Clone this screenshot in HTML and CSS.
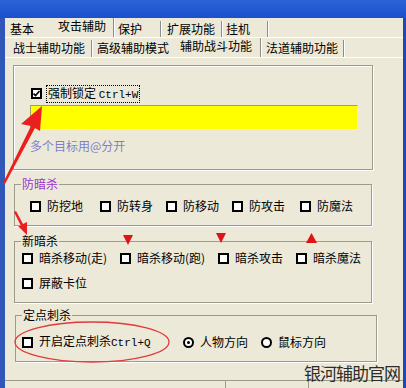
FILE: index.html
```html
<!DOCTYPE html>
<html lang="zh-CN">
<head>
    <meta charset="UTF-8">
    <title>攻击辅助</title>
    <link rel="stylesheet" href="styles.css">
</head>
<body>
    <div class="titlebar"></div>
    <div class="window">
        <div class="client">
            <div class="tabs tabs-top">
                <div class="tab">基本</div>
                <div class="tab active">攻击辅助</div>
                <div class="tab">保护</div>
                <div class="tab">扩展功能</div>
                <div class="tab">挂机</div>
            </div>
            <div class="tabs tabs-sub">
                <div class="tab">战士辅助功能</div>
                <div class="tab">高级辅助模式</div>
                <div class="tab active">辅助战斗功能</div>
                <div class="tab">法道辅助功能</div>
            </div>

            <div class="page">
                <div class="lockbox">
                    <div class="lock-row">
                        <span class="check on">
                            <svg width="7" height="7" viewBox="0 0 7 7"><polyline points="0.5,3.5 2.5,5.5 6.5,1" fill="none" stroke="#000" stroke-width="1.6"/></svg>
                        </span>
                        <span class="focus">强制锁定 <span class="mono">Ctrl+W</span></span>
                    </div>
                    <div class="yellow"></div>
                    <div class="hint">多个目标用@分开</div>
                </div>

                <fieldset class="group group-anti">
                    <legend class="purple">防暗杀</legend>
                    <div class="row-anti">
                        <div class="item"><span class="check"></span><span>防挖地</span></div>
                        <div class="item"><span class="check"></span><span>防转身</span></div>
                        <div class="item"><span class="check"></span><span>防移动</span></div>
                        <div class="item"><span class="check"></span><span>防攻击</span></div>
                        <div class="item"><span class="check"></span><span>防魔法</span></div>
                    </div>
                </fieldset>

                <fieldset class="group group-new">
                    <legend>新暗杀</legend>
                    <div class="row-new">
                        <div class="item"><span class="check"></span><span>暗杀移动(走)</span></div>
                        <div class="item"><span class="check"></span><span>暗杀移动(跑)</span></div>
                        <div class="item"><span class="check"></span><span>暗杀攻击</span></div>
                        <div class="item"><span class="check"></span><span>暗杀魔法</span></div>
                        <div class="item"><span class="check"></span><span>屏蔽卡位</span></div>
                    </div>
                </fieldset>

                <fieldset class="group group-point">
                    <legend>定点刺杀</legend>
                    <div class="row-point">
                        <div class="item"><span class="check"></span><span>开启定点刺杀<span class="mono">Ctrl+Q</span></span></div>
                        <div class="item"><span class="radio on"></span><span>人物方向</span></div>
                        <div class="item"><span class="radio"></span><span>鼠标方向</span></div>
                    </div>
                </fieldset>

                <div class="strip">
                    <div class="cell cell-a"></div>
                    <div class="cell cell-b"></div>
                    <div class="cell cell-c"></div>
                </div>
            </div>
        </div>
    </div>

    <div class="watermark">银河辅助官网</div>

    <!-- red annotations drawn over the dialog -->
    <svg class="marks" width="406" height="388" viewBox="0 0 406 388">
        <polygon points="42,106 21,124 31,126 3,183 5,184 35,128 40,131" fill="#ec1f1f"/>
        <polygon points="14,212 16,211 23,224 27,222 27,235 18,226 21,226" fill="#ec1f1f"/>
        <polygon points="123,235 133,235 128,245" fill="#e01414"/>
        <polygon points="216,233 226,233 221,243" fill="#e01414"/>
        <polygon points="306,243 317,243 311.5,233" fill="#e01414"/>
        <ellipse cx="92" cy="342" rx="77" ry="20" fill="none" stroke="#e03a3a" stroke-width="1.3"/>
    </svg>
</body>
</html>
```

FILE: styles.css
```css
body {
    margin: 0;
    width: 406px;
    height: 388px;
    overflow: hidden;
    position: relative;
    background: #ece9d8;
    font-family: "Noto Sans CJK SC", "Noto Sans", sans-serif;
    font-size: 12px;
    line-height: 16px;
    color: #000;
}
.titlebar {
    height: 18px;
    background: linear-gradient(#2c64d8, #1a50cb);
}
.window {
    display: flex;
    height: 370px;
    border-left: 5px solid #3158b8;
    border-right: 3px solid #1c49b8;
}
.client {
    flex: 1;
}
.tabs {
    display: flex;
    box-sizing: border-box;
    border-bottom: 1px solid #fff;
}
.tab {
    box-sizing: border-box;
    white-space: nowrap;
    border-right: 1px solid #8c8c8c;
    box-shadow: 1px 0 0 #fff;
    padding-left: 5px;
}
.tabs-top {
    height: 20px;
    padding-top: 3px;
}
.tabs-top .tab {
    height: 16px;
}
.tabs-top .tab:nth-child(1) { width: 48px; border-right: none; box-shadow: none; }
.tabs-top .tab:nth-child(2) { width: 61px; }
.tabs-top .tab:nth-child(3) { width: 47px; padding-left: 4px; }
.tabs-top .tab:nth-child(4) { width: 61px; padding-left: 6px; }
.tabs-top .tab:nth-child(5) { width: 46px; padding-left: 4px; }
.tabs-top .tab.active {
    margin-top: -3px;
    height: 19px;
}
.tabs-sub {
    height: 20px;
    padding-top: 2px;
}
.tabs-sub .tab {
    height: 17px;
}
.tabs-sub .tab:nth-child(1) { width: 87px; padding-left: 8px; }
.tabs-sub .tab:nth-child(2) { width: 83px; border-right: none; box-shadow: none; }
.tabs-sub .tab:nth-child(3) { width: 86px; }
.tabs-sub .tab:nth-child(4) { width: 83px; }
.tabs-sub .tab.active {
    margin-top: -2px;
    height: 19px;
}
.page {
    padding-top: 7px;
}
.lockbox {
    margin-left: 8px;
    width: 360px;
    height: 105px;
    box-sizing: border-box;
    border: 1px solid #9d9b8c;
    box-shadow: 1px 1px 0 #fff, inset 1px 1px 0 #fff;
    padding: 20px 0 0 16px;
}
.lock-row {
    display: flex;
    align-items: center;
    height: 15px;
}
.lock-row .check {
    margin-left: 1px;
}
.focus {
    margin-left: 4px;
    border: 1px dotted #000;
    padding: 0 1px;
    line-height: 13px;
}
.mono {
    font-family: "Liberation Mono", monospace;
    font-size: 11px;
}
.yellow {
    margin-top: 4px;
    width: 328px;
    height: 25px;
    box-sizing: border-box;
    background: #ffff00;
    border: 1px solid;
    border-color: #a59d62 #f3f1d6 #f3f1d6 #a59d62;
}
.hint {
    margin-top: 8px;
    color: #7f7fcc;
}
.group {
    margin: 0;
    padding: 0;
    min-width: 0;
    box-sizing: border-box;
    border: 1px solid #9d9b8c;
    box-shadow: 1px 1px 0 #fff;
}
.group legend {
    margin-left: 6px;
    padding: 0 1px;
    line-height: 16px;
}
.purple {
    color: #9933cc;
}
.group-anti {
    margin: 6px 0 0 9px;
    width: 358px;
    height: 50px;
}
.group-new {
    margin: 7px 0 0 9px;
    width: 358px;
    height: 70px;
}
.group-point {
    margin: 4px 0 0 10px;
    width: 362px;
    height: 55px;
}
.row-anti {
    display: grid;
    grid-template-columns: 70px 66px 66px 68px auto;
    margin: 6px 0 0 15px;
}
.row-new {
    display: grid;
    grid-template-columns: 98px 98px 78px auto;
    row-gap: 9px;
    margin: 1px 0 0 7px;
}
.row-point {
    display: grid;
    grid-template-columns: 161px 78px auto;
    margin: 10px 0 0 6px;
}
.item {
    display: flex;
    align-items: center;
    gap: 6px;
    white-space: nowrap;
}
.check {
    width: 11px;
    height: 11px;
    box-sizing: border-box;
    border: 2px solid #000;
    background: #fff;
    flex: none;
    display: flex;
    align-items: center;
    justify-content: center;
}
.radio {
    width: 11px;
    height: 11px;
    box-sizing: border-box;
    border: 2px solid #000;
    border-radius: 50%;
    background: #fff;
    flex: none;
    display: flex;
    align-items: center;
    justify-content: center;
}
.radio.on::after {
    content: "";
    width: 3px;
    height: 3px;
    border-radius: 50%;
    background: #000;
}
.strip {
    margin-top: 18px;
    display: flex;
    height: 10px;
    border-top: 1px solid #9d9b8c;
}
.cell {
    height: 10px;
}
.cell-a { width: 220px; }
.cell-b { width: 78px; border-left: 1px solid #9d9b8c; }
.cell-c { width: 90px; margin-left: 4px; border-left: 1px solid #9d9b8c; }
.watermark {
    position: absolute;
    left: 304px;
    top: 362px;
    font-size: 17px;
    line-height: 22px;
    letter-spacing: -1px;
    color: #2b2b2b;
}
.marks {
    position: absolute;
    left: 0;
    top: 0;
    pointer-events: none;
}
```
